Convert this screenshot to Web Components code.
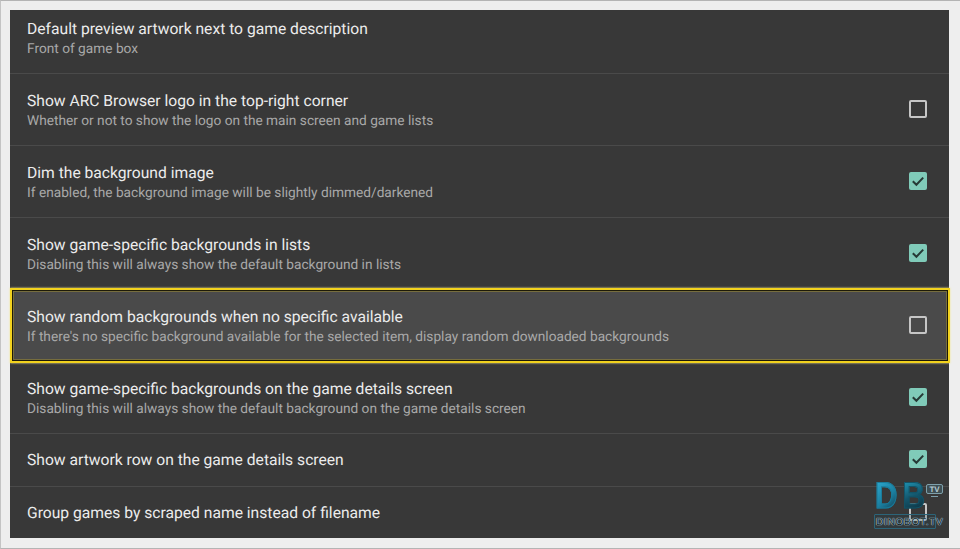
<!DOCTYPE html>
<html>
<head>
<meta charset="utf-8">
<style>
    html, body{
        margin: 0;
        height: 100%;
    }
    body{
        background: #eeeeee;
        font-family: Roboto, "Liberation Sans", sans-serif;
        text-rendering: geometricPrecision;
    }
</style>
</head>
<body>

<settings-screen>
    <setting-row title="Default preview artwork next to game description" desc="Front of game box" h="64" first></setting-row>
    <setting-row title="Show ARC Browser logo in the top-right corner" desc="Whether or not to show the logo on the main screen and game lists" state="off"></setting-row>
    <setting-row title="Dim the background image" desc="If enabled, the background image will be slightly dimmed/darkened" state="on"></setting-row>
    <setting-row title="Show game-specific backgrounds in lists" desc="Disabling this will always show the default background in lists" state="on"></setting-row>
    <setting-row title="Show random backgrounds when no specific available" desc="If there's no specific background available for the selected item, display random downloaded backgrounds" state="off" focused></setting-row>
    <setting-row title="Show game-specific backgrounds on the game details screen" desc="Disabling this will always show the default background on the game details screen" state="on"></setting-row>
    <setting-row title="Show artwork row on the game details screen" state="on" h="53"></setting-row>
    <setting-row title="Group games by scraped name instead of filename" state="off" h="51" last></setting-row>
    <dino-logo></dino-logo>
</settings-screen>

<script>
// page frame with the dark panel
class SettingsScreen extends HTMLElement{
    constructor() {
        super();
        this.attachShadow({ mode: 'open' });
        this.shadowRoot.innerHTML = `
            <style>
                :host{
                    display: block;
                    box-sizing: border-box;
                    width: 960px;
                    height: 549px;
                    padding: 9px 0 0 9px;
                    border-top: 1px solid #b4b4b4;
                    border-left: 1px solid #c4c4c4;
                    border-bottom: 1px solid #b4b4b4;
                    position: relative;
                    overflow: hidden;
                }
                .panel{
                    background: #383838;
                    width: 939px;
                    height: 528px;
                    display: flex;
                    flex-direction: column;
                }
            </style>
            <div class="panel"><slot></slot></div>
        `;
    }
}

class SettingRow extends HTMLElement{
    constructor() {
        super();
        this.attachShadow({ mode: 'open' });
        const h = this.getAttribute('h') || 72;
        const desc = this.getAttribute('desc');
        const state = this.getAttribute('state');
        let box = '';
        if (state === 'on') {
            box = `<svg width="18" height="18" viewBox="0 0 18 18">
                <rect x="0" y="0" width="18" height="18" rx="2" fill="#80cbb9"/>
                <path d="M3.8 9.2 L7.4 12.8 L14.2 5.6" fill="none" stroke="#263a36" stroke-width="2"/>
            </svg>`;
        } else if (state === 'off') {
            box = `<svg width="18" height="18" viewBox="0 0 18 18">
                <rect x="1" y="1" width="16" height="16" rx="1" fill="none" stroke="#c6c6c6" stroke-width="2"/>
            </svg>`;
        }
        this.shadowRoot.innerHTML = `
            <style>
                :host{
                    display: block;
                    box-sizing: border-box;
                    height: ${h}px;
                    flex: none;
                    position: relative;
                    border-bottom: ${this.hasAttribute('last') ? 0 : 1}px solid #4a4a4a;
                }
                :host([focused]){
                    background: #4a4a4a;
                    border-bottom-color: transparent;
                }
                :host([focused])::after{
                    content: '';
                    position: absolute;
                    inset: -2px -1px -2px 0;
                    border: 2px solid #f2d21e;
                    box-shadow: 0 0 2px #f5e98a, inset 0 0 0 1px #1d1a08, inset 0 0 0 2px rgba(200, 175, 40, .35);
                    pointer-events: none;
                }
                :host([first]) .row{
                    align-items: flex-start;
                    padding-top: 9px;
                }
                .row{
                    height: 100%;
                    box-sizing: border-box;
                    display: flex;
                    align-items: center;
                    padding: 0 22px 0 17px;
                }
                .text{
                    flex: 1;
                    display: flex;
                    flex-direction: column;
                    gap: 3px;
                }
                .text.two{
                    padding-top: 1px;
                }
                .title{
                    font-size: 15.65px;
                    line-height: 18px;
                    color: #ececec;
                }
                .desc{
                    font-size: 13.7px;
                    line-height: 16px;
                    color: #a9a9a9;
                }
                svg{
                    display: block;
                    margin-bottom: 2px;
                }
            </style>
            <div class="row">
                <div class="text ${desc ? 'two' : ''}">
                    <div class="title">${this.getAttribute('title')}</div>
                    ${desc ? `<div class="desc">${desc}</div>` : ''}
                </div>
                ${box}
            </div>
        `;
    }
}

// watermark lying over the bottom right of the list
class DinoLogo extends HTMLElement{
    constructor() {
        super();
        this.attachShadow({ mode: 'open' });
        this.shadowRoot.innerHTML = `
            <style>
                :host{
                    position: absolute;
                    left: 871px;
                    top: 479px;
                    width: 76px;
                    height: 52px;
                    display: block;
                    font-family: "Liberation Sans", sans-serif;
                }
                .db{
                    position: absolute;
                    left: 3px;
                    top: -3px;
                    display: flex;
                    gap: 6px;
                    font-size: 37px;
                    line-height: 38px;
                    font-weight: bold;
                    transform: scaleX(.84);
                    transform-origin: left top;
                }
                .db span{
                    -webkit-background-clip: text;
                    background-clip: text;
                    color: transparent;
                }
                .d{
                    background-image: linear-gradient(140deg, #2aa3c9 15%, #1b7e9f 55%, #123f52 90%);
                    -webkit-text-stroke: 1px #1a7c9b;
                }
                .b{
                    background-image: linear-gradient(160deg, #1f93b3 10%, #14566c 50%, #0e2f3c 90%);
                    -webkit-text-stroke: 1px #125468;
                }
                .tv{
                    position: absolute;
                    left: 54px;
                    top: 4px;
                    width: 15px;
                    height: 8px;
                    background: #3f4f54;
                    border: 1px solid #7ea0ab;
                    border-radius: 2px;
                    font-size: 8px;
                    line-height: 9px;
                    font-weight: bold;
                    text-align: center;
                    color: #b5cbd3;
                }
                .tv::after{
                    content: '';
                    position: absolute;
                    left: 4px;
                    top: 11px;
                    width: 7px;
                    height: 1px;
                    background: #7ea0ab;
                }
                .name{
                    position: absolute;
                    left: 2px;
                    top: 34px;
                    width: 62px;
                    height: 15px;
                    box-sizing: border-box;
                    border: 1px solid #2c6478;
                    border-radius: 1px;
                    font-size: 10px;
                    line-height: 15px;
                    letter-spacing: .75px;
                    white-space: nowrap;
                    padding-left: 1px;
                    color: #0e1e25;
                    text-shadow: 0 0 1px #b4d4e0, 0 0 1px #b4d4e0, 0 0 1px #b4d4e0;
                    background: rgba(30, 70, 85, .2);
                }
            </style>
            <div class="db"><span class="d">D</span><span class="b">B</span></div>
            <div class="tv">TV</div>
            <div class="name">DINOBOT.TV</div>
        `;
    }
}

window.customElements.define('settings-screen', SettingsScreen);
window.customElements.define('setting-row', SettingRow);
window.customElements.define('dino-logo', DinoLogo);
</script>
</body>
</html>
